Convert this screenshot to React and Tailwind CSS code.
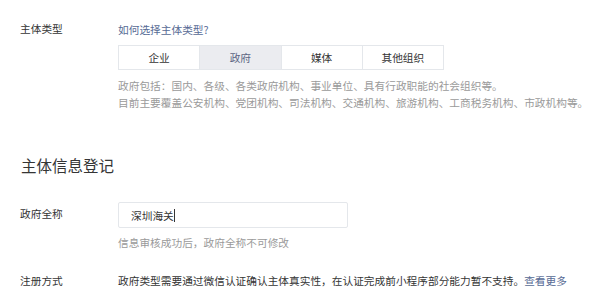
export default function App() {
  const font = { fontFamily: '"Noto Sans CJK SC", "Noto Sans", sans-serif' };
  const segs = ["企业", "政府", "媒体", "其他组织"];
  return (
    <div className="w-[600px] h-[305px] bg-white overflow-hidden text-[10.7px] leading-[17px] text-[#353535]" style={font}>
      <div className="flex pt-[20px]">
        <div className="w-[118px] pl-[20px] shrink-0">主体类型</div>
        <div className="flex flex-col pt-[1px]">
          <div className="text-[#576b95]">如何选择主体类型?</div>
          <div className="mt-[7px] flex w-[326px] h-[25px] border border-[#e4e7eb]">
            {segs.map((s, i) => (
              <div
                key={s}
                className={
                  "flex-1 flex items-center justify-center " +
                  (i > 0 ? "border-l border-[#e4e7eb] " : "") +
                  (i === 1 ? "bg-[#ebecf0] text-[#5d6684]" : "bg-white text-[#353535]")
                }
              >
                {s}
              </div>
            ))}
          </div>
          <div className="mt-[7px] text-[#9a9a9a]">
            <div>政府包括：国内、各级、各类政府机构、事业单位、具有行政职能的社会组织等。</div>
            <div>目前主要覆盖公安机构、党团机构、司法机构、交通机构、旅游机构、工商税务机构、市政机构等。</div>
          </div>
        </div>
      </div>
      <div className="pl-[21px] mt-[43px] text-[15.5px] leading-[22px] text-[#353535]">主体信息登记</div>
      <div className="flex mt-[26px]">
        <div className="w-[118px] pl-[20px] shrink-0 pt-[3px]">政府全称</div>
        <div className="flex flex-col">
          <div className="w-[230px] h-[26px] border border-[#e4e7eb] rounded-[2px] flex items-center px-[12px]">
            <span>深圳海关</span>
            <span className="inline-block w-px h-[13px] bg-[#353535]" />
          </div>
          <div className="mt-[6px] text-[#9a9a9a]">信息审核成功后，政府全称不可修改</div>
        </div>
      </div>
      <div className="flex mt-[21px]">
        <div className="w-[118px] pl-[20px] shrink-0">注册方式</div>
        <div>
          政府类型需要通过微信认证确认主体真实性，在认证完成前小程序部分能力暂不支持。<span className="text-[#576b95]">查看更多</span>
        </div>
      </div>
    </div>
  );
}
